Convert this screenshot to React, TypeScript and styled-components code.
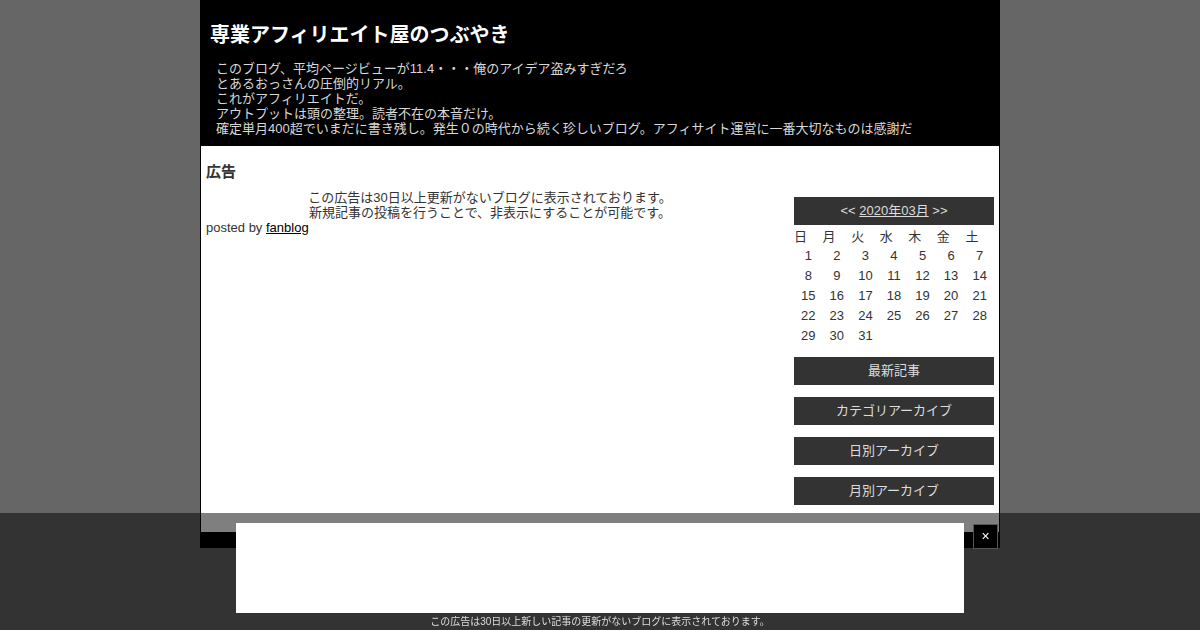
import React from 'react';
import styled, { createGlobalStyle } from 'styled-components';

const GlobalStyle = createGlobalStyle`
  body {
    margin: 0;
    background: #666666;
    font-family: 'Liberation Sans', 'Noto Sans CJK JP', Arial, sans-serif;
    color: #333333;
  }
`;

const Page = styled.div`
  width: 798px;
  margin: 0 auto;
  border-left: 1px solid #000;
  border-right: 1px solid #000;
  background: #ffffff;
`;

const Header = styled.header`
  background: #000000;
  padding: 22px 0 10px 9px;
`;

const BlogTitle = styled.h1`
  margin: 0;
  font-size: 20px;
  line-height: 26px;
  font-weight: bold;
  color: #ffffff;
`;

const Description = styled.div`
  margin-top: 13px;
  padding-left: 6px;
  font-size: 13px;
  line-height: 15px;
  color: #d8d8d8;
`;

const Body = styled.div`
  display: flex;
  gap: 20px;
  padding: 16px 5px 27px 5px;
`;

const Main = styled.main`
  width: 568px;
  font-size: 13px;
  line-height: 15px;
`;

const EntryTitle = styled.h2`
  margin: 0 0 8px;
  font-size: 15px;
  line-height: 20px;
  font-weight: bold;
`;

const AdText = styled.div`
  text-align: center;
`;

const Posted = styled.div`
  a {
    color: #000;
  }
`;

const Side = styled.aside`
  width: 200px;
  margin-top: 35px;
  display: flex;
  flex-direction: column;
  gap: 12px;
  font-size: 13px;
`;

const Bar = styled.div`
  height: 28px;
  line-height: 28px;
  background: #333333;
  color: #dddddd;
  text-align: center;
  a {
    color: #dddddd;
  }
`;

const CalTable = styled.table`
  width: 200px;
  border-collapse: collapse;
  table-layout: fixed;
  th {
    font-weight: normal;
    text-align: left;
    height: 20px;
    padding: 0;
  }
  td {
    text-align: center;
    height: 20px;
    padding: 0;
  }
`;

const Footer = styled.footer`
  height: 16px;
  background: #000;
`;

const Overlay = styled.div`
  position: fixed;
  left: 0;
  right: 0;
  bottom: 0;
  height: 117px;
  background: rgba(0, 0, 0, 0.5);
`;

const AdBox = styled.div`
  width: 728px;
  height: 90px;
  margin: 10px auto 0;
  background: #ffffff;
`;

const Close = styled.div`
  position: absolute;
  top: 11px;
  left: calc(50% + 373px);
  width: 23px;
  height: 23px;
  border: 1px solid #555;
  background: #000;
  color: #fff;
  font-size: 14px;
  line-height: 22px;
  text-align: center;
`;

const OverlayNote = styled.div`
  margin-top: 2px;
  font-size: 10px;
  line-height: 14px;
  color: #dddddd;
  text-align: center;
`;

const weeks: (number | null)[][] = [
  [1, 2, 3, 4, 5, 6, 7],
  [8, 9, 10, 11, 12, 13, 14],
  [15, 16, 17, 18, 19, 20, 21],
  [22, 23, 24, 25, 26, 27, 28],
  [29, 30, 31, null, null, null, null],
];

const days = ['日', '月', '火', '水', '木', '金', '土'];

export default function App() {
  return (
    <>
      <GlobalStyle />
      <Page>
        <Header>
          <BlogTitle>専業アフィリエイト屋のつぶやき</BlogTitle>
          <Description>
            このブログ、平均ページビューが11.4・・・俺のアイデア盗みすぎだろ
            <br />
            とあるおっさんの圧倒的リアル。
            <br />
            これがアフィリエイトだ。
            <br />
            アウトプットは頭の整理。読者不在の本音だけ。
            <br />
            確定単月400超でいまだに書き残し。発生０の時代から続く珍しいブログ。アフィサイト運営に一番大切なものは感謝だ
          </Description>
        </Header>
        <Body>
          <Main>
            <EntryTitle>広告</EntryTitle>
            <AdText>
              この広告は30日以上更新がないブログに表示されております。
              <br />
              新規記事の投稿を行うことで、非表示にすることが可能です。
            </AdText>
            <Posted>
              posted by <a href="#">fanblog</a>
            </Posted>
          </Main>
          <Side>
            <div>
              <Bar>
                {'<< '}
                <a href="#">2020年03月</a>
                {' >>'}
              </Bar>
              <CalTable>
                <thead>
                  <tr>
                    {days.map((d) => (
                      <th key={d}>{d}</th>
                    ))}
                  </tr>
                </thead>
                <tbody>
                  {weeks.map((w, i) => (
                    <tr key={i}>
                      {w.map((d, j) => (
                        <td key={j}>{d ?? ''}</td>
                      ))}
                    </tr>
                  ))}
                </tbody>
              </CalTable>
            </div>
            <Bar>最新記事</Bar>
            <Bar>カテゴリアーカイブ</Bar>
            <Bar>日別アーカイブ</Bar>
            <Bar>月別アーカイブ</Bar>
          </Side>
        </Body>
        <Footer />
      </Page>
      <Overlay>
        <AdBox />
        <Close>×</Close>
        <OverlayNote>この広告は30日以上新しい記事の更新がないブログに表示されております。</OverlayNote>
      </Overlay>
    </>
  );
}
